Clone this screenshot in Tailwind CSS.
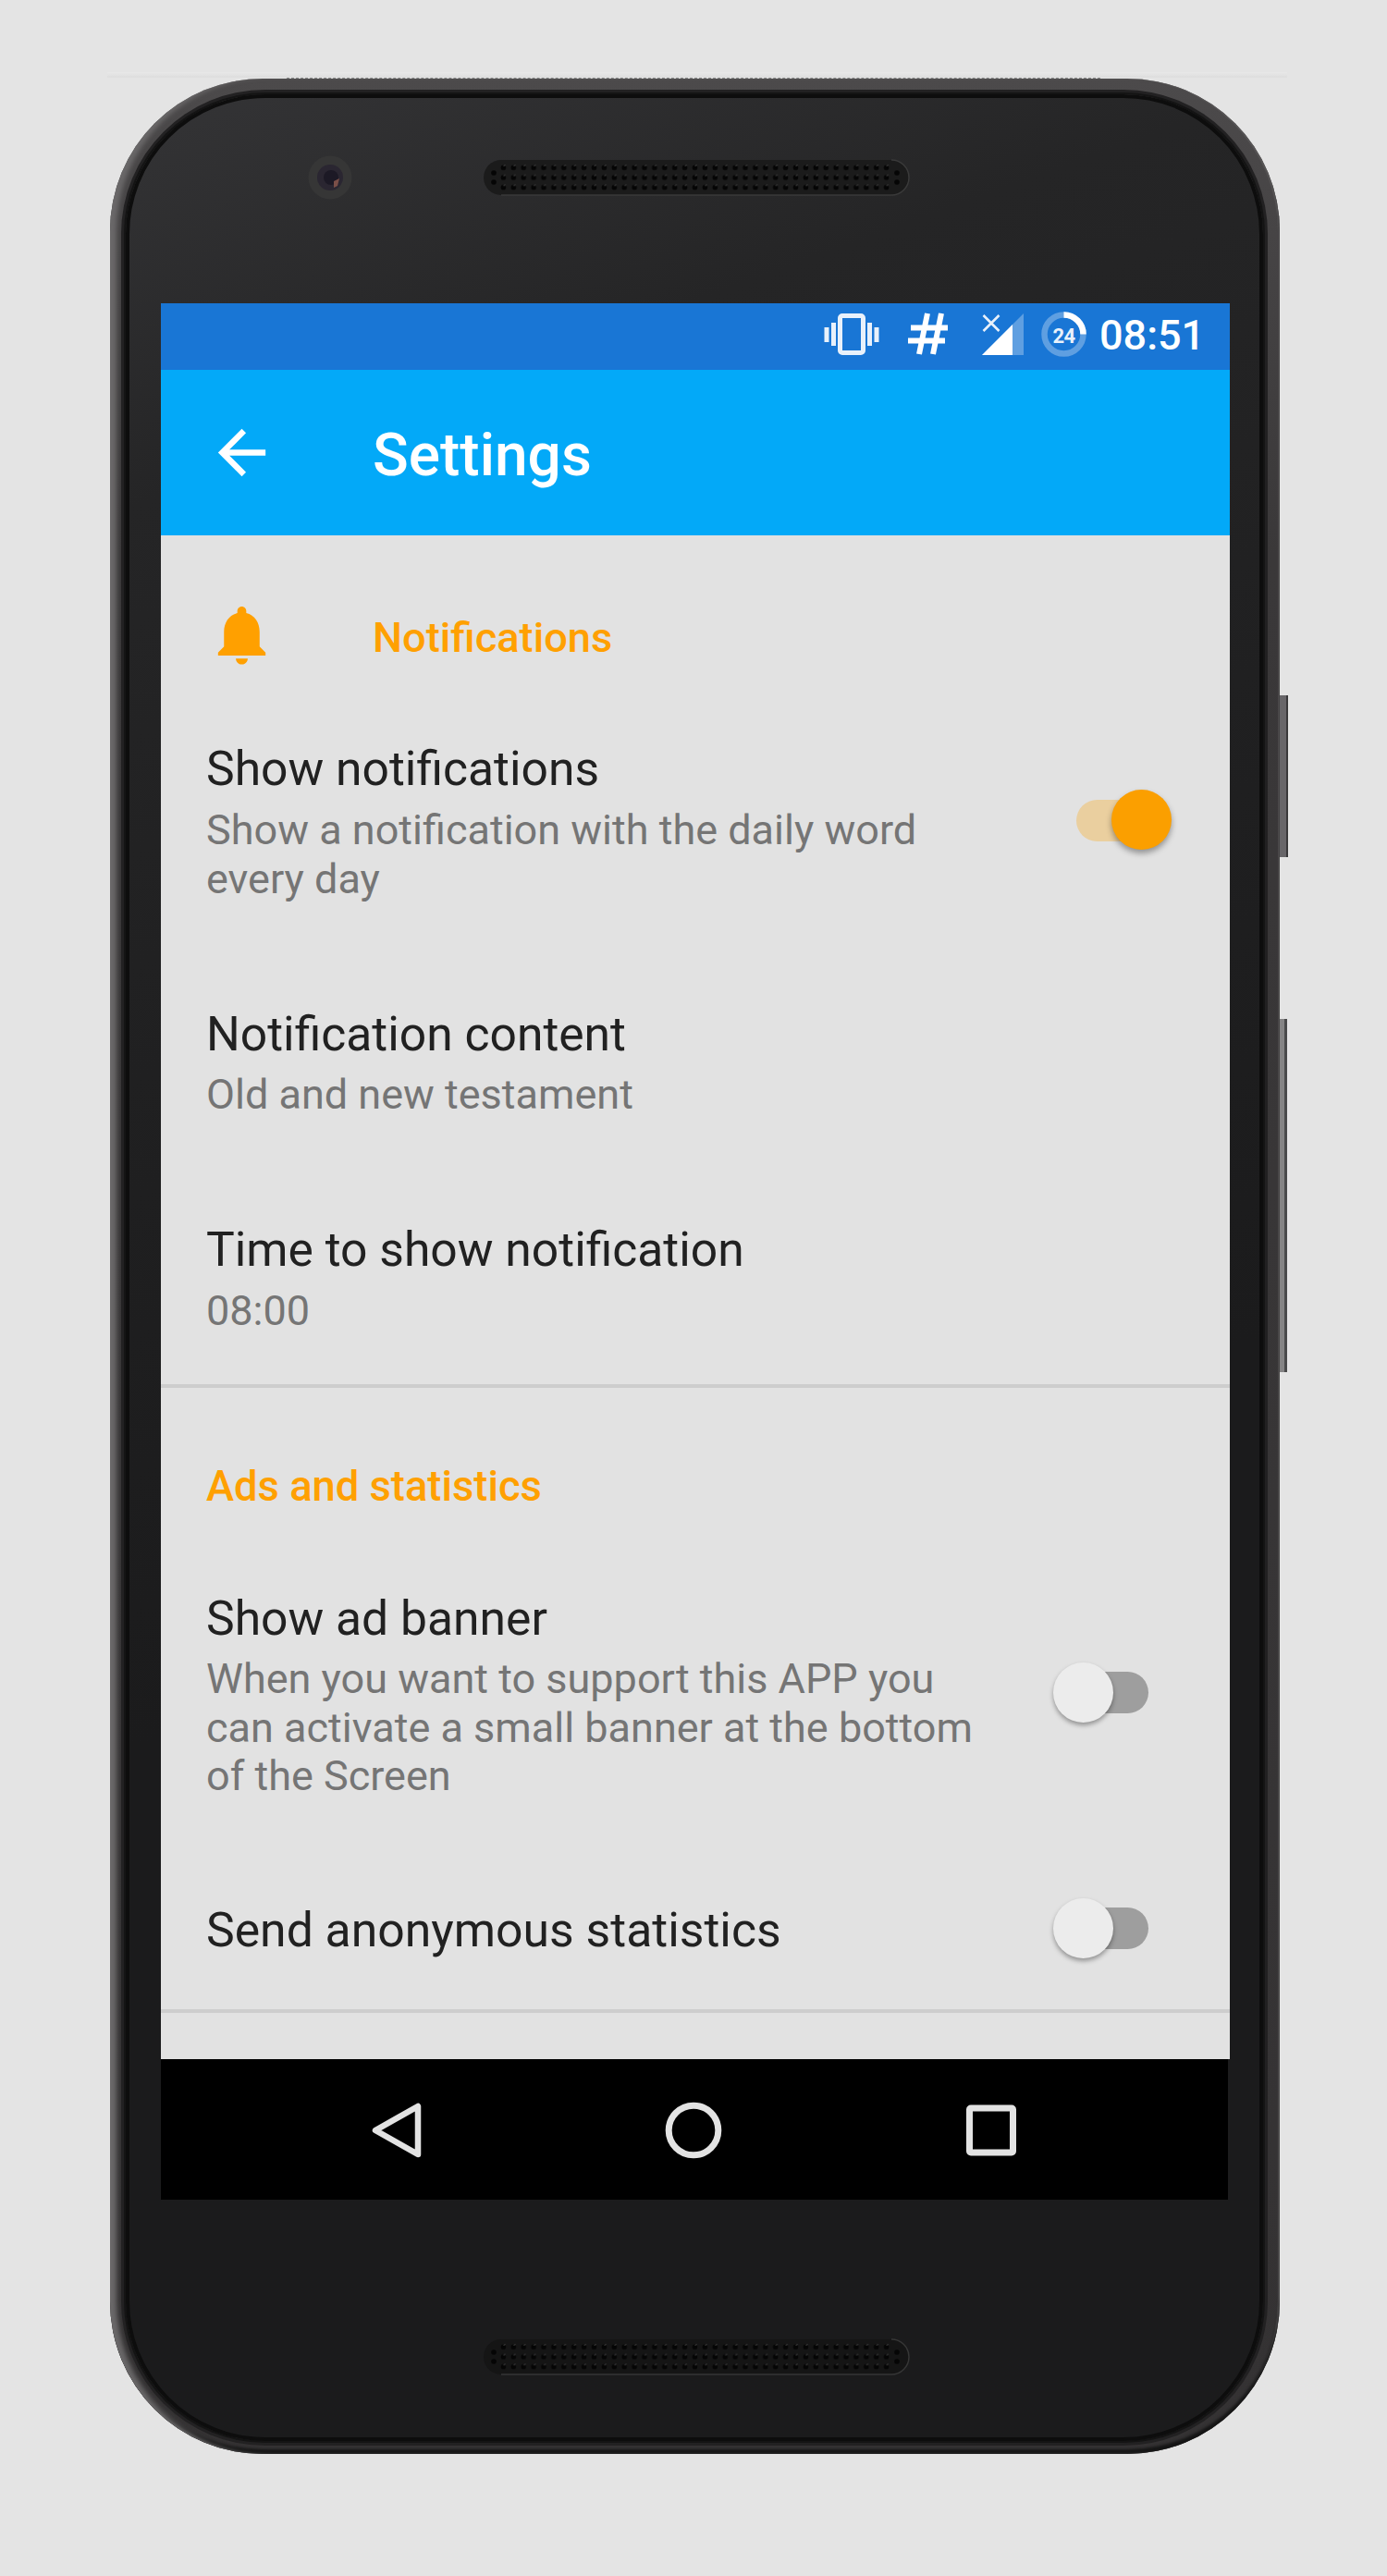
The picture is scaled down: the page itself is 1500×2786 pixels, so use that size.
<!DOCTYPE html>
<html lang="en">
<head>
<meta charset="utf-8">
<title>Settings</title>
<script src="https://cdn.jsdelivr.net/npm/@tailwindcss/browser@4"></script>
</head>
<body class="bg-[#e4e4e4] font-['Roboto',sans-serif]">
<div class="relative h-[2786px] w-[1500px] overflow-hidden pt-[85px] pl-[119px]">
  <!-- side buttons -->
  <div class="absolute top-[752px] left-[1380px] h-[175px] w-[13px] border-r-2 border-[#3a393b] bg-[#686669]"></div>
  <div class="absolute top-[1102px] left-[1380px] h-[382px] w-[12px] border-r-3 border-[#4a4a4b] bg-[#858485]"></div>
  <!-- light edge above the phone -->
  <div class="absolute top-[78px] left-[116px] h-[6px] w-[1276px] bg-linear-to-b from-[#e8e8e8] to-[#dddddd]"></div>
  <div class="absolute top-[84px] left-[310px] w-[880px] border-t border-dashed border-[#8a8a8a]"></div>

  <div class="relative h-[2569px] w-[1265px] rounded-[165px] bg-linear-to-b from-[#4c4a4b] via-[#3a3839] via-20% to-[#343233] pt-[17px] pr-[18px] pb-[14px] pl-[17px] shadow-[inset_9px_0_5px_-2px_#6a6869,inset_0_-5px_3px_#151515,inset_-2px_0_1px_#5a5859]">
    <div class="flex h-full w-full flex-col rounded-[151px] border-4 border-[#0d0d0d] bg-[linear-gradient(160deg,#343436_0%,#252526_15%,#1f1f20_40%,#1b1b1c_60%)] bg-origin-border pl-[34px] shadow-[0_0_0_2px_#141414,0_0_0_5px_#222122]">
      <!-- camera and earpiece -->
      <div class="-ml-[34px] flex h-[222px] shrink-0 pt-[61px] pl-[192px]">
        <svg class="h-[50px] w-[50px]" viewBox="0 0 50 50"><circle cx="25" cy="25" r="23.500" fill="#363636"/><circle cx="25" cy="25" r="14" fill="#2a2631"/><circle cx="26" cy="25" r="8" fill="#1c1925"/><path d="M29 29l6-3-2 8-4 2z" fill="#7a4f48"/></svg>
        <svg class="mt-[5px] ml-[140px] h-[40px] w-[462px]" viewBox="0 0 462 40">
          <defs><pattern id="dots" x="17" y="4" width="10.9" height="10.7" patternUnits="userSpaceOnUse"><circle cx="5.4" cy="5.3" r="2.8" fill="#050505"/><path d="M5.500 3.500l2-1" stroke="#444" stroke-width="1"/></pattern></defs>
          <rect x="1" y="1" width="460" height="38" rx="19" fill="#1b1b1b"/>
          <path d="M442 1a19 19 0 0 1 0 38H20" fill="none" stroke="#3a3a3a" stroke-width="1.500"/>
          <rect x="17" y="4" width="425.1" height="32.1" fill="url(#dots)"/>
          <g fill="#050505"><circle cx="12" cy="15" r="2.8"/><circle cx="12" cy="25" r="2.8"/><circle cx="448" cy="15" r="2.8"/><circle cx="448" cy="25" r="2.8"/></g>
        </svg>
      </div>

      <main class="flex h-[2051px] w-[1156px] shrink-0 flex-col bg-[#e2e2e2]">
        <header class="shrink-0 text-white">
          <div class="flex h-[72px] items-center bg-[#1976d5] pb-[4px] pl-[716px]">
            <svg class="h-[50px] w-[290px] shrink-0" viewBox="0 0 290 50">
              <g fill="#e8f1fb"><rect x="1.500" y="17" width="5" height="16"/><rect x="9" y="12" width="5" height="25"/><rect x="48" y="12" width="5" height="25"/><rect x="55.500" y="17" width="5" height="16"/></g>
              <rect x="18.500" y="4.500" width="25" height="40" rx="2.500" fill="none" stroke="#e8f1fb" stroke-width="5"/>
              <path d="M113 2l-9 44M128 2l-9 44M95 17.500h40M92 31.500h40" fill="none" stroke="#fff" stroke-width="6"/>
              <path d="M217 2v45h-45z" fill="#5f9fe1"/><path d="M205 14v33h-33z" fill="#fff"/>
              <path d="M173.500 4l17 17M190.500 4l-17 17" stroke="#e8f1fb" stroke-width="2.600"/>
              <circle cx="260.500" cy="24.500" r="21" fill="none" stroke="#5f9fe1" stroke-width="6.500"/>
              <path d="M260.500 3.500a21 21 0 0 1 21 21" fill="none" stroke="#fff" stroke-width="6.500"/>
              <text x="260.500" y="34" text-anchor="middle" font-size="22" font-weight="700" letter-spacing="-0.500" fill="#e8f1fb" font-family="Roboto">24</text>
            </svg>
            <span class="ml-[9px] text-[45px] leading-none font-medium">08:51</span>
          </div>
          <div class="flex h-[179px] items-center bg-[#03a9f8] pl-[49px]">
            <svg class="h-[77px] w-[77px]" viewBox="0 0 24 24"><path fill="#fff" d="M20 11H7.830l5.590-5.590L12 4l-8 8 8 8 1.410-1.410L7.830 13H20v-2z"/></svg>
            <h1 class="ml-[103px] pt-[6px] text-[64px] leading-none font-medium">Settings</h1>
          </div>
        </header>

        <section class="h-[922px] shrink-0 border-b-4 border-[#cdcdcd] pl-[49px]">
          <div class="flex h-[218px] items-center">
            <svg class="-mt-[3px] h-[77px] w-[77px]" viewBox="0 0 24 24"><path fill="#ffa000" d="M12 22c1.100 0 2-.900 2-2h-4c0 1.100.890 2 2 2zm6-6v-5c0-3.070-1.640-5.640-4.500-6.320V4c0-.830-.670-1.500-1.500-1.500s-1.500.670-1.500 1.500v.680C7.630 5.360 6 7.920 6 11v5l-2 2v1h16v-1l-2-2z"/></svg>
            <h2 class="ml-[103px] pt-[3px] text-[45.200px] leading-none font-medium text-[#ffa000]">Notifications</h2>
          </div>
          <div class="flex h-[234px]">
            <div class="w-[880px] shrink-0"><p class="text-[51.600px] leading-[70px] text-[#212121]">Show notifications</p><p class="mt-[5px] text-[45px] leading-[52.500px] text-[#757575]">Show a notification with the daily word<br>every day</p></div>
            <div class="relative mt-[68px] ml-[61px] h-[45px] w-[100px] rounded-full bg-[#eacf9f]"><div class="absolute -top-[11px] left-[38px] h-[65px] w-[65px] rounded-full bg-[#fb9f00] shadow-[0_4px_6px_rgba(0,0,0,0.35)]"></div></div>
          </div>
          <div class="h-[234px] pt-[53px]"><p class="text-[51.600px] leading-[70px] text-[#212121]">Notification content</p><p class="mt-[4px] text-[45px] leading-[52.500px] text-[#757575]">Old and new testament</p></div>
          <div class="pt-[52px]"><p class="text-[51.600px] leading-[70px] text-[#212121]">Time to show notification</p><p class="mt-[5px] text-[45px] leading-[52.500px] text-[#757575]">08:00</p></div>
        </section>

        <section class="h-[676px] shrink-0 border-b-4 border-[#cdcdcd] pl-[49px]">
          <h2 class="pt-[83px] text-[45.300px] leading-[48px] font-medium text-[#ffa000]">Ads and statistics</h2>
          <div class="mt-[84px] flex">
            <div class="w-[880px] shrink-0"><p class="text-[51.600px] leading-[70px] text-[#212121]">Show ad banner</p><p class="mt-[4px] text-[45px] leading-[52.500px] text-[#757575]">When you want to support this APP you<br>can activate a small banner at the bottom<br>of the Screen</p></div>
            <div class="relative mt-[92px] ml-[37px] h-[45px] w-[102px] rounded-full bg-[#9e9e9e]"><div class="absolute -top-[10px] -left-px h-[65px] w-[65px] rounded-full bg-[#ececec] shadow-[0_3px_5px_rgba(0,0,0,0.35)]"></div></div>
          </div>
          <div class="mt-[103px] flex h-[70px] items-center">
            <p class="w-[880px] shrink-0 pt-[5px] text-[51.700px] leading-[70px] text-[#212121]">Send anonymous statistics</p>
            <div class="relative ml-[37px] h-[45px] w-[102px] rounded-full bg-[#9e9e9e]"><div class="absolute -top-[10px] -left-px h-[65px] w-[65px] rounded-full bg-[#ececec] shadow-[0_3px_5px_rgba(0,0,0,0.35)]"></div></div>
          </div>
        </section>
        <div class="flex-1"></div>
        <div class="shrink-0 bg-[#1c1c1d]">
          <nav class="flex h-[152px] w-[1154px] items-center bg-black pt-[2px] pl-[224px]">
            <svg class="h-[64px] w-[64px]" viewBox="0 0 64 64"><path d="M54 6v52L8 32z" fill="none" stroke="#e3e3e3" stroke-width="6.500" stroke-linejoin="round"/></svg>
            <svg class="ml-[256px] h-[64px] w-[64px]" viewBox="0 0 64 64"><circle cx="32" cy="32" r="26.800" fill="none" stroke="#e3e3e3" stroke-width="7"/></svg>
            <svg class="ml-[258px] h-[64px] w-[64px]" viewBox="0 0 64 64"><rect x="8.500" y="8" width="47" height="48" rx="1.500" fill="none" stroke="#e3e3e3" stroke-width="7"/></svg>
          </nav>
        </div>
      </main>

      <!-- bottom speaker -->
      <svg class="mt-[150px] ml-[348px] h-[40px] w-[462px] shrink-0" viewBox="0 0 462 40">
        <rect x="1" y="1" width="460" height="38" rx="19" fill="#151515"/>
        <path d="M442 1a19 19 0 0 1 0 38H20" fill="none" stroke="#363636" stroke-width="1.500"/>
        <rect x="17" y="4" width="425.1" height="32.1" fill="url(#dots)"/>
        <g fill="#050505"><circle cx="12" cy="15" r="2.8"/><circle cx="12" cy="25" r="2.8"/><circle cx="448" cy="15" r="2.8"/><circle cx="448" cy="25" r="2.8"/></g>
      </svg>
    </div>
  </div>
</div>
</body>
</html>
